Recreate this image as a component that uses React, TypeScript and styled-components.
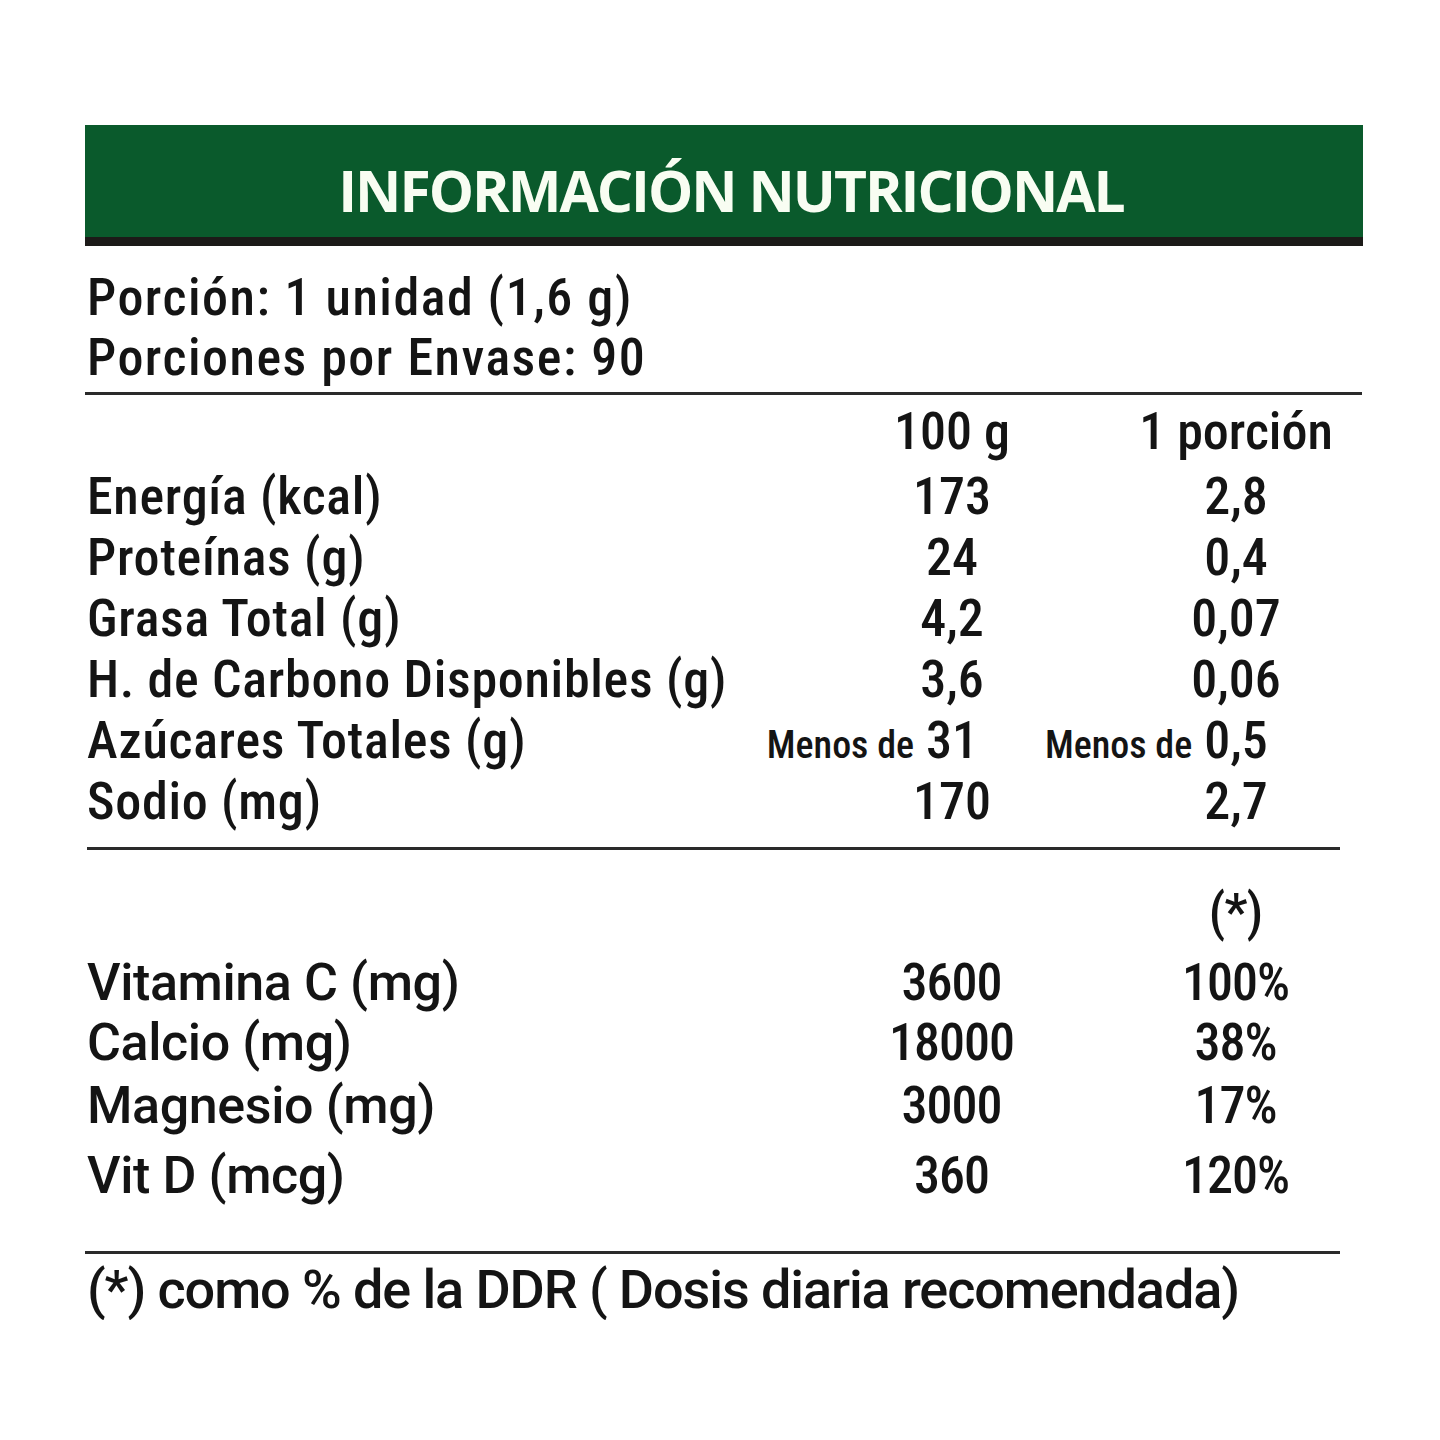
import React from "react";
import styled, { createGlobalStyle } from "styled-components";

const Global = createGlobalStyle`
  html, body { margin: 0; padding: 0; background: #ffffff; }
  body { font-family: "Roboto", "Noto Sans", sans-serif; font-stretch: 75%; color: #141414; }
`;

const Page = styled.div`
  width: 1278px;
  padding: 125px 0 0 85px;
`;

const Header = styled.div`
  height: 112px;
  background: #0a5a2c;
  border-bottom: 9px solid #1c1a18;
  display: flex;
  align-items: center;
  justify-content: center;
`;

const Title = styled.h1`
  margin: 0;
  padding: 18px 0 0 14px;
  font-family: "Open Sans", sans-serif;
  font-stretch: 100%;
  font-weight: 700;
  font-size: 57px;
  letter-spacing: -2px;
  color: #f8fdf2;
`;

const Serving = styled.div`
  margin-top: 22px;
  padding-left: 2px;
  font-size: 52px;
  font-weight: 500;
  line-height: 60px;
  letter-spacing: 1.5px;
`;

const Rule = styled.div<{ $inset?: number; $top: number; $width: number }>`
  height: 3px;
  background: #2a2a2a;
  margin-top: ${(p) => p.$top}px;
  margin-left: ${(p) => p.$inset ?? 0}px;
  width: ${(p) => p.$width}px;
`;

const Table = styled.div<{
  $top: number;
  $labelSpacing: number;
  $labelStretch: number;
  $numSpacing: number;
}>`
  margin-top: ${(p) => p.$top}px;
  display: grid;
  grid-template-columns: 703px 240px 240px;
  column-gap: 44px;
  font-weight: 500;
  --label-spacing: ${(p) => p.$labelSpacing}px;
  --label-stretch: ${(p) => p.$labelStretch}%;
  --num-spacing: ${(p) => p.$numSpacing}px;
`;

const Cell = styled.div<{ $h: number }>`
  height: ${(p) => p.$h}px;
  line-height: 61px;
  font-size: 52px;
  white-space: nowrap;
`;

const Label = styled(Cell)`
  padding-left: 2px;
  letter-spacing: var(--label-spacing);
  font-stretch: var(--label-stretch);
`;

const Value = styled(Cell)`
  display: grid;
  grid-template-columns: minmax(0, 1fr) auto minmax(0, 1fr);
  align-items: baseline;
`;

const Prefix = styled.span`
  justify-self: end;
  font-size: 38px;
  padding-right: 12px;
`;

const Num = styled.span`
  grid-column: 2;
  letter-spacing: var(--num-spacing);
  margin-right: calc(-1 * var(--num-spacing));
`;

const Footer = styled.div`
  margin-top: 6px;
  padding-left: 2px;
  font-size: 54px;
  font-weight: 500;
  font-stretch: 100%;
  line-height: 60px;
  letter-spacing: -1.1px;
`;

type Row = { label: string; a: string; b: string; pa?: string; pb?: string; h?: number };

const macros: Row[] = [
  { label: "Energía (kcal)", a: "173", b: "2,8" },
  { label: "Proteínas (g)", a: "24", b: "0,4" },
  { label: "Grasa Total (g)", a: "4,2", b: "0,07" },
  { label: "H. de Carbono Disponibles (g)", a: "3,6", b: "0,06" },
  { label: "Azúcares Totales (g)", a: "31", b: "0,5", pa: "Menos de", pb: "Menos de" },
  { label: "Sodio (mg)", a: "170", b: "2,7" },
];

const vitamins: Row[] = [
  { label: "Vitamina C (mg)", a: "3600", b: "100%", h: 60 },
  { label: "Calcio (mg)", a: "18000", b: "38%", h: 63 },
  { label: "Magnesio (mg)", a: "3000", b: "17%", h: 70 },
  { label: "Vit D (mcg)", a: "360", b: "120%", h: 61 },
];

function ValueCell({ v, prefix, h }: { v: string; prefix?: string; h: number }) {
  return (
    <Value $h={h}>
      {prefix ? <Prefix>{prefix}</Prefix> : <span />}
      <Num>{v}</Num>
    </Value>
  );
}

function Rows({ rows, h }: { rows: Row[]; h: number }) {
  return (
    <>
      {rows.map((r) => (
        <React.Fragment key={r.label}>
          <Label $h={r.h ?? h}>{r.label}</Label>
          <ValueCell v={r.a} prefix={r.pa} h={r.h ?? h} />
          <ValueCell v={r.b} prefix={r.pb} h={r.h ?? h} />
        </React.Fragment>
      ))}
    </>
  );
}

export default function App() {
  return (
    <Page>
      <Global />
      <Header>
        <Title>INFORMACIÓN NUTRICIONAL</Title>
      </Header>
      <Serving>
        <div>Porción: 1 unidad (1,6 g)</div>
        <div>Porciones por Envase: 90</div>
      </Serving>
      <Rule $top={4} $width={1277} />
      <Table $top={6} $labelSpacing={0.7} $labelStretch={75} $numSpacing={0}>
        <Label $h={65} />
        <ValueCell v="100 g" h={65} />
        <ValueCell v="1 porción" h={65} />
        <Rows rows={macros} h={61} />
      </Table>
      <Rule $top={15} $inset={2} $width={1253} />
      <Table $top={32} $labelSpacing={-0.4} $labelStretch={100} $numSpacing={-1}>
        <Label $h={70} />
        <Value $h={70}>
          <span />
        </Value>
        <ValueCell v="(*)" h={70} />
        <Rows rows={vitamins} h={61} />
      </Table>
      <Rule $top={45} $width={1255} />
      <Footer>(*) como % de la DDR ( Dosis diaria recomendada)</Footer>
    </Page>
  );
}
